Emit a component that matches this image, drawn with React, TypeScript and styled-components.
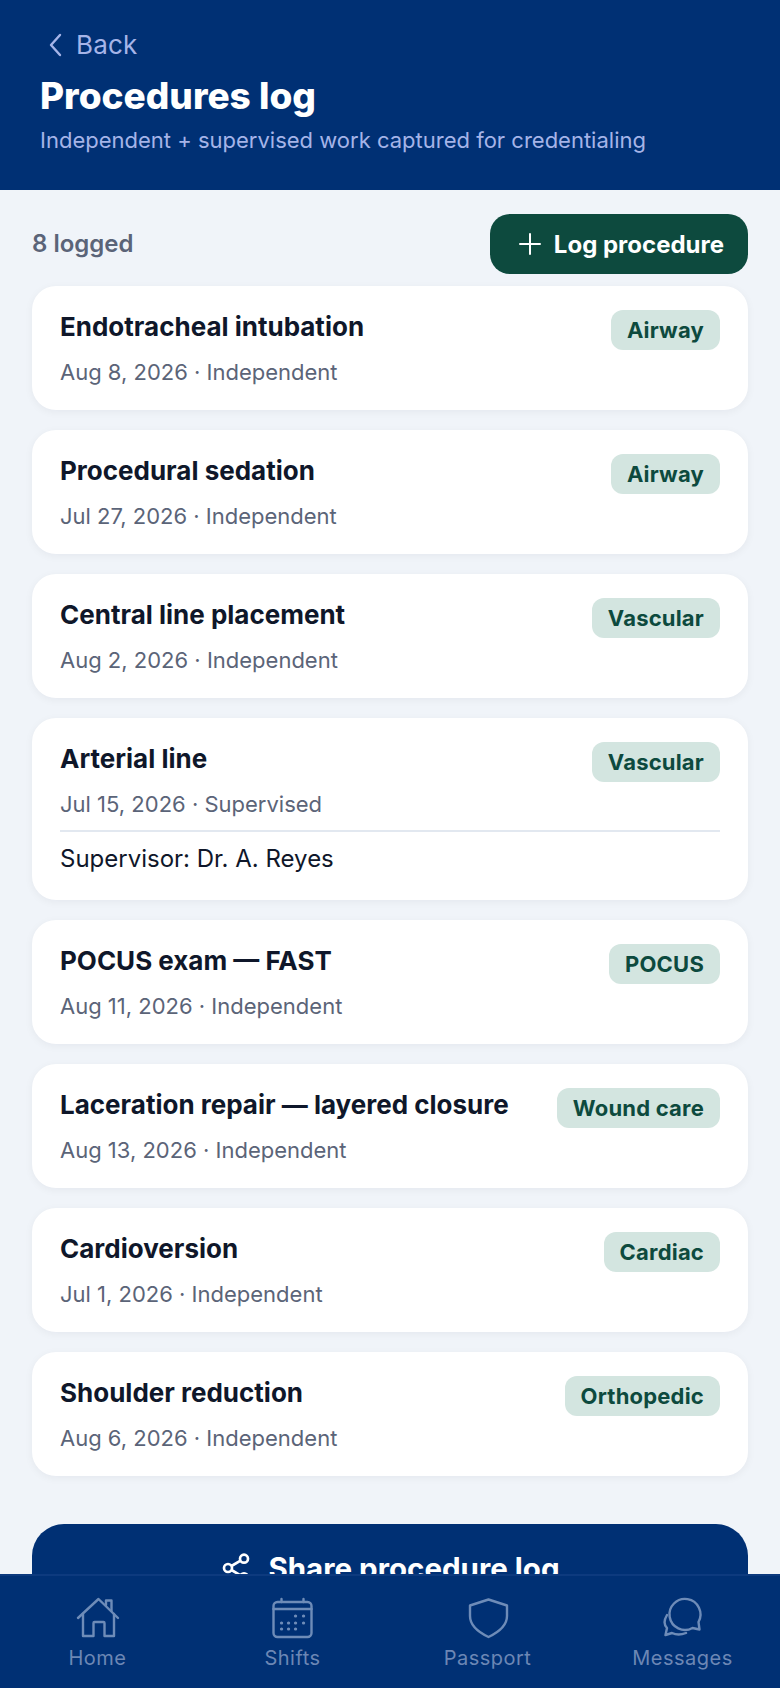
import React from 'react';
import styled, { createGlobalStyle } from 'styled-components';

const GlobalStyle = createGlobalStyle`
	html, body {
		margin: 0;
		padding: 0;
		background: #f0f4f9;
		font-family: Inter, "Liberation Sans", sans-serif;
	}
	* {
		box-sizing: border-box;
	}
`;

const Screen = styled.div`
	position: relative;
	width: 780px;
	height: 1688px;
	overflow: hidden;
	background: #f0f4f9;
`;

const Header = styled.header`
	height: 190px;
	padding: 27px 40px 0;
	background: #003074;
`;

const BackLink = styled.div`
	display: flex;
	align-items: center;
	gap: 12px;
	height: 36px;
	padding-left: 8px;
	color: #a5b4e8;
	font-size: 26px;
	line-height: 36px;
	letter-spacing: 0.2px;
`;

const PageTitle = styled.h1`
	margin: 9px 0 0;
	color: #fff;
	font-size: 37px;
	font-weight: 800;
	line-height: 48px;
`;

const PageSubtitle = styled.p`
	margin: 5px 0 0;
	color: #a5b4e8;
	font-size: 22px;
	line-height: 30px;
`;

const Content = styled.main`
	padding: 24px 32px 0;
`;

const Toolbar = styled.div`
	display: flex;
	align-items: center;
	justify-content: space-between;
	margin-bottom: 12px;
`;

const LoggedCount = styled.span`
	padding-bottom: 2px;
	color: #5b6478;
	font-size: 24px;
	font-weight: 600;
`;

const LogButton = styled.button`
	display: flex;
	align-items: center;
	gap: 12px;
	height: 60px;
	padding: 0 24px 0 28px;
	border: 0;
	border-radius: 20px;
	background: #0d4a3e;
	color: #fff;
	font-family: inherit;
	font-size: 24px;
	font-weight: 700;
`;

const CardList = styled.div`
	display: flex;
	flex-direction: column;
	gap: 20px;
`;

const Card = styled.article`
	padding: 24px 28px;
	border-radius: 24px;
	background: #fff;
	box-shadow: 0 2px 8px rgba(15, 23, 42, 0.05);
`;

const CardTop = styled.div`
	display: flex;
	align-items: flex-start;
	justify-content: space-between;
	gap: 16px;
`;

const CardTitle = styled.h2`
	margin: 0;
	color: #0f172a;
	font-size: 26px;
	font-weight: 700;
	line-height: 34px;
`;

const CardMeta = styled.div`
	margin-top: 14px;
	color: #5b6478;
	font-size: 22px;
	line-height: 28px;
`;

const Badge = styled.span`
	flex-shrink: 0;
	height: 40px;
	padding: 0 16px;
	border-radius: 12px;
	background: #d3e5e0;
	color: #0d4a3e;
	font-size: 22px;
	font-weight: 700;
	line-height: 40px;
	letter-spacing: 0.2px;
`;

const Supervisor = styled.div`
	margin-top: 12px;
	padding-top: 10px;
	border-top: 2px solid #e2e8f0;
	color: #0f172a;
	font-size: 24px;
	line-height: 34px;
`;

const ShareButton = styled.button`
	display: flex;
	align-items: center;
	justify-content: center;
	gap: 16px;
	width: 100%;
	height: 88px;
	margin-top: 48px;
	border: 0;
	border-radius: 32px;
	background: #003074;
	color: #fff;
	font-family: inherit;
	font-size: 29.5px;
	font-weight: 700;
`;

const TabBar = styled.nav`
	position: absolute;
	left: 0;
	right: 0;
	bottom: 0;
	display: grid;
	grid-template-columns: repeat(4, 1fr);
	height: 114px;
	padding: 20px 0 0;
	border-top: 2px solid #0d3a7e;
	background: #003074;
`;

const Tab = styled.div`
	display: flex;
	flex-direction: column;
	align-items: center;
	color: #6c87b5;
	font-size: 20px;
	line-height: 28px;
	letter-spacing: 0.5px;
`;

const TabIcon = styled.svg`
	width: 44px;
	height: 44px;
	margin-bottom: 4px;
	fill: none;
	stroke: #6e8cb8;
	stroke-width: 2.4;
	stroke-linecap: round;
	stroke-linejoin: round;
`;

const procedures = [
	{ title: 'Endotracheal intubation', meta: 'Aug 8, 2026 · Independent', tag: 'Airway' },
	{ title: 'Procedural sedation', meta: 'Jul 27, 2026 · Independent', tag: 'Airway' },
	{ title: 'Central line placement', meta: 'Aug 2, 2026 · Independent', tag: 'Vascular' },
	{ title: 'Arterial line', meta: 'Jul 15, 2026 · Supervised', tag: 'Vascular', supervisor: 'Dr. A. Reyes' },
	{ title: 'POCUS exam — FAST', meta: 'Aug 11, 2026 · Independent', tag: 'POCUS' },
	{ title: 'Laceration repair — layered closure', meta: 'Aug 13, 2026 · Independent', tag: 'Wound care' },
	{ title: 'Cardioversion', meta: 'Jul 1, 2026 · Independent', tag: 'Cardiac' },
	{ title: 'Shoulder reduction', meta: 'Aug 6, 2026 · Independent', tag: 'Orthopedic' },
];

const App: React.FC = () => (
	<Screen>
		<GlobalStyle />
		<Header>
			<BackLink>
				<svg width="16" height="26" viewBox="0 0 16 26" fill="none" stroke="#a5b4e8" strokeWidth="2.4" strokeLinecap="round" strokeLinejoin="round">
					<path d="M12 3 3 13l9 10" />
				</svg>
				Back
			</BackLink>
			<PageTitle>Procedures log</PageTitle>
			<PageSubtitle>Independent + supervised work captured for credentialing</PageSubtitle>
		</Header>
		<Content>
			<Toolbar>
				<LoggedCount>8 logged</LoggedCount>
				<LogButton>
					<svg width="24" height="24" viewBox="0 0 24 24" fill="none" stroke="#fff" strokeWidth="2" strokeLinecap="round">
						<path d="M12 2v20M2 12h20" />
					</svg>
					Log procedure
				</LogButton>
			</Toolbar>
			<CardList>
				{procedures.map((p) => (
					<Card key={p.title}>
						<CardTop>
							<div>
								<CardTitle>{p.title}</CardTitle>
								<CardMeta>{p.meta}</CardMeta>
							</div>
							<Badge>{p.tag}</Badge>
						</CardTop>
						{p.supervisor && <Supervisor>Supervisor: {p.supervisor}</Supervisor>}
					</Card>
				))}
			</CardList>
			<ShareButton>
				<svg width="32" height="32" viewBox="0 0 24 24" fill="none" stroke="#fff" strokeWidth="2">
					<circle cx="18" cy="5" r="3" />
					<circle cx="6" cy="12" r="3" />
					<circle cx="18" cy="19" r="3" />
					<path d="m8.6 13.5 6.8 4M15.4 6.5l-6.8 4" />
				</svg>
				Share procedure log
			</ShareButton>
		</Content>
		<TabBar>
			<Tab>
				<TabIcon viewBox="0 0 44 44">
					<path d="M2 22 22.5 3 42 22" />
					<path d="M30 9V4.5h5.5V15" />
					<path d="M7 18v22h10.5V27a1 1 0 0 1 1-1h9a1 1 0 0 1 1 1v13H38V18" />
				</TabIcon>
				Home
			</Tab>
			<Tab>
				<TabIcon viewBox="0 0 44 44">
					<rect x="2.5" y="6" width="38" height="35" rx="4" />
					<path d="M2.5 13h38M10.5 3v3M32.5 3v3" />
					<path d="M24.5 20h.1M32.5 20h.1M10.5 27h.1M17.5 27h.1M24.5 27h.1M32.5 27h.1M10.5 33h.1M17.5 33h.1M24.5 33h.1" strokeWidth="3.2" />
				</TabIcon>
				Shifts
			</Tab>
			<Tab>
				<TabIcon viewBox="0 0 44 44">
					<path d="M22.5 3.5 41 9.5V20c0 9-8 16-18.500 21C12 36 4 29 4 20V9.500Z" />
				</TabIcon>
				Passport
			</Tab>
			<Tab>
				<TabIcon viewBox="0 0 44 44">
					<path d="M31.500 32A15.500 15.500 0 1 1 37.500 26L38.500 33.500Z" />
					<path d="M6 19C3 24 3 29 6 32L4.500 39L11 37C15 39 20 39 25 37" />
				</TabIcon>
				Messages
			</Tab>
		</TabBar>
	</Screen>
);

export default App;
